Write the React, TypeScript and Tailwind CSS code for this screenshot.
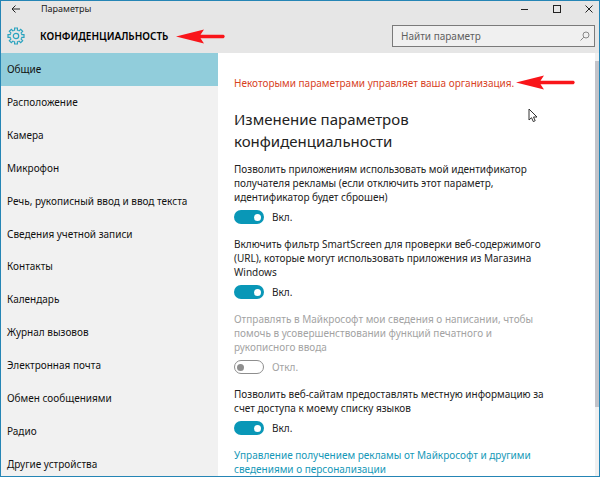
import React from "react";

const sections = [
  "Общие",
  "Расположение",
  "Камера",
  "Микрофон",
  "Речь, рукописный ввод и ввод текста",
  "Сведения учетной записи",
  "Контакты",
  "Календарь",
  "Журнал вызовов",
  "Электронная почта",
  "Обмен сообщениями",
  "Радио",
  "Другие устройства",
];

const settings = [
  {
    id: "ads",
    lines: [
      "Позволить приложениям использовать мой идентификатор",
      "получателя рекламы (если отключить этот параметр,",
      "идентификатор будет сброшен)",
    ],
    on: true,
    disabled: false,
  },
  {
    id: "smartscreen",
    lines: [
      "Включить фильтр SmartScreen для проверки веб-содержимого",
      "(URL), которые могут использовать приложения из Магазина",
      "Windows",
    ],
    on: true,
    disabled: false,
  },
  {
    id: "typing",
    lines: [
      "Отправлять в Майкрософт мои сведения о написании, чтобы",
      "помочь в усовершенствовании функций печатного и",
      "рукописного ввода",
    ],
    on: false,
    disabled: true,
  },
  {
    id: "languages",
    lines: [
      "Позволить веб-сайтам предоставлять местную информацию за",
      "счет доступа к моему списку языков",
    ],
    on: true,
    disabled: false,
  },
];

const ShortArrow: React.FC = () => (
  <svg width="50" height="15" viewBox="0 0 50 15" className="shrink-0" aria-hidden="true">
    <path d="M0 7.5 L28 0.5 L24.5 5.8 H47.5 Q50 7.5 47.5 9.2 H24.5 L28 14.5 Z" fill="#f9151a" />
  </svg>
);

const LongArrow: React.FC = () => (
  <svg width="60" height="15" viewBox="0 0 60 15" className="shrink-0" aria-hidden="true">
    <path d="M0 7.5 L28 0.5 L24.5 5.8 H57.5 Q60 7.5 57.5 9.2 H24.5 L28 14.5 Z" fill="#f9151a" />
  </svg>
);

const GearIcon: React.FC = () => {
  const teeth = [0, 45, 90, 135, 180, 225, 270, 315];
  return (
    <svg width="18" height="18" viewBox="0 0 18 18" fill="none" stroke="#2ba3bf" aria-hidden="true">
      {teeth.map((angle) => (
        <path
          key={angle}
          d="M6.7 3.5 L7.6 3.1 V1 H10.4 V3.1 L11.3 3.5"
          strokeWidth="1.2"
          transform={`rotate(${angle} 9 9)`}
        />
      ))}
      <circle cx="9" cy="9" r="2.7" strokeWidth="1.2" />
    </svg>
  );
};

interface ToggleProps {
  id: string;
  on: boolean;
  disabled: boolean;
}

const Toggle: React.FC<ToggleProps> = ({ id, on, disabled }) => {
  const [checked, setChecked] = React.useState(on);

  return (
    <div className="mt-1.5 flex h-3.5 items-center gap-2">
      <button
        type="button"
        role="switch"
        aria-checked={checked}
        aria-labelledby={id}
        disabled={disabled}
        onClick={() => setChecked(!checked)}
        className={`flex h-3.5 w-[30px] items-center rounded-full ${
          checked ? "justify-end bg-[#0997b7] px-[3px]" : "justify-start border border-[#8e8e8e] px-0.5"
        }`}
      >
        <span className={`size-[7px] rounded-full ${checked ? "bg-white" : "bg-[#8e8e8e]"}`} />
      </button>
      <span className={disabled ? "text-[#a3a3a3]" : ""}>{checked ? "Вкл." : "Откл."}</span>
    </div>
  );
};

export default function App() {
  return (
    <div className="relative flex h-screen flex-col overflow-hidden border border-[#2585b5] bg-white font-['Noto_Sans',sans-serif] text-[10px] leading-[14px] text-[#222]">
      <header className="shrink-0 bg-[#e6e6e6]">
        {/* Title bar */}
        <div className="flex h-4 items-center pr-1.5 pl-2.5">
          <button type="button" aria-label="Назад" className="w-[30px]">
            <svg width="10" height="8" viewBox="0 0 10 8" fill="none" stroke="#222">
              <path d="M9 4 H1 M4.5 0.5 L1 4 L4.5 7.5" />
            </svg>
          </button>
          <span className="flex-1 text-[9px]">Параметры</span>
          <div className="flex items-center gap-6">
            <button type="button" aria-label="Свернуть">
              <svg width="8" height="8" viewBox="0 0 8 8" stroke="#222">
                <path d="M0 4.5 H7" />
              </svg>
            </button>
            <button type="button" aria-label="Развернуть">
              <svg width="8" height="8" viewBox="0 0 8 8" fill="none" stroke="#222">
                <rect x="0.5" y="0.5" width="7" height="7" />
              </svg>
            </button>
            <button type="button" aria-label="Закрыть">
              <svg width="8" height="8" viewBox="0 0 8 8" stroke="#222">
                <path d="M0.5 0.5 L7.5 7.5 M7.5 0.5 L0.5 7.5" />
              </svg>
            </button>
          </div>
        </div>

        {/* Page name and search */}
        <div className="flex h-9 items-center pt-0.5 pr-1 pl-1.5">
          <div className="flex flex-1 items-center">
            <span className="w-[33px]">
              <GearIcon />
            </span>
            <h1 className="mr-2 font-semibold text-black">КОНФИДЕНЦИАЛЬНОСТЬ</h1>
            <ShortArrow />
          </div>
          <label className="flex h-[22px] w-[203px] items-center border border-[#7a7a7a] bg-[#f0f0f0] pr-1 pl-2">
            <input
              type="text"
              aria-label="Найти параметр"
              placeholder="Найти параметр"
              className="min-w-0 flex-1 outline-none placeholder:text-[#5f5f5f]"
            />
            <svg width="10" height="10" viewBox="0 0 10 10" fill="none" stroke="#888" aria-hidden="true">
              <circle cx="6" cy="4" r="3" />
              <path d="M3.8 6.2 L0.5 9.5" />
            </svg>
          </label>
        </div>
      </header>

      <div className="flex min-h-0 flex-1">
        {/* Sections */}
        <nav className="-mb-1 flex w-[217px] shrink-0 flex-col bg-[#f1f1f1]">
          {sections.map((section, index) => (
            <a
              key={section}
              href="#"
              className={`flex flex-1 items-center px-1.5 text-[#111] ${index === 0 ? "bg-[#91cddb]" : ""}`}
            >
              {section}
            </a>
          ))}
        </nav>

        {/* Settings of the chosen section */}
        <main className="min-w-0 flex-1 overflow-hidden pt-[22px] pl-4">
          <div className="flex items-center gap-0.5 text-[#d8431f]">
            <p className="whitespace-nowrap">Некоторыми параметрами управляет ваша организация.</p>
            <LongArrow />
          </div>
          <h2 className="mt-[18px] mb-2.5 text-[15px] leading-[22px]">
            Изменение параметров
            <br />
            конфиденциальности
          </h2>
          <div className="flex flex-col gap-[13px]">
            {settings.map((setting) => (
              <div key={setting.id}>
                <p id={setting.id} className={setting.disabled ? "text-[#a3a3a3]" : ""}>
                  {setting.lines.map((line) => (
                    <span key={line} className="block whitespace-nowrap">
                      {line}
                    </span>
                  ))}
                </p>
                <Toggle id={setting.id} on={setting.on} disabled={setting.disabled} />
              </div>
            ))}
            <a href="#" className="whitespace-nowrap text-[#1598b8]">
              Управление получением рекламы от Майкрософт и другими
              <br />
              сведениями о персонализации
            </a>
          </div>
        </main>

        {/* Scrollbar */}
        <div className="w-1 bg-[#f0f0f0] pt-2">
          <div className="h-5/6 bg-[#c2c3c9]" />
        </div>
      </div>

      {/* Mouse pointer */}
      <svg
        className="absolute top-[107px] left-[527px]"
        width="10"
        height="15"
        viewBox="0 0 10 15"
        fill="#fff"
        stroke="#333"
        aria-hidden="true"
      >
        <path d="M1 1 V12 L3.5 9.7 L5.3 13.6 L7.2 12.7 L5.5 9 H9 Z" />
      </svg>
    </div>
  );
}
